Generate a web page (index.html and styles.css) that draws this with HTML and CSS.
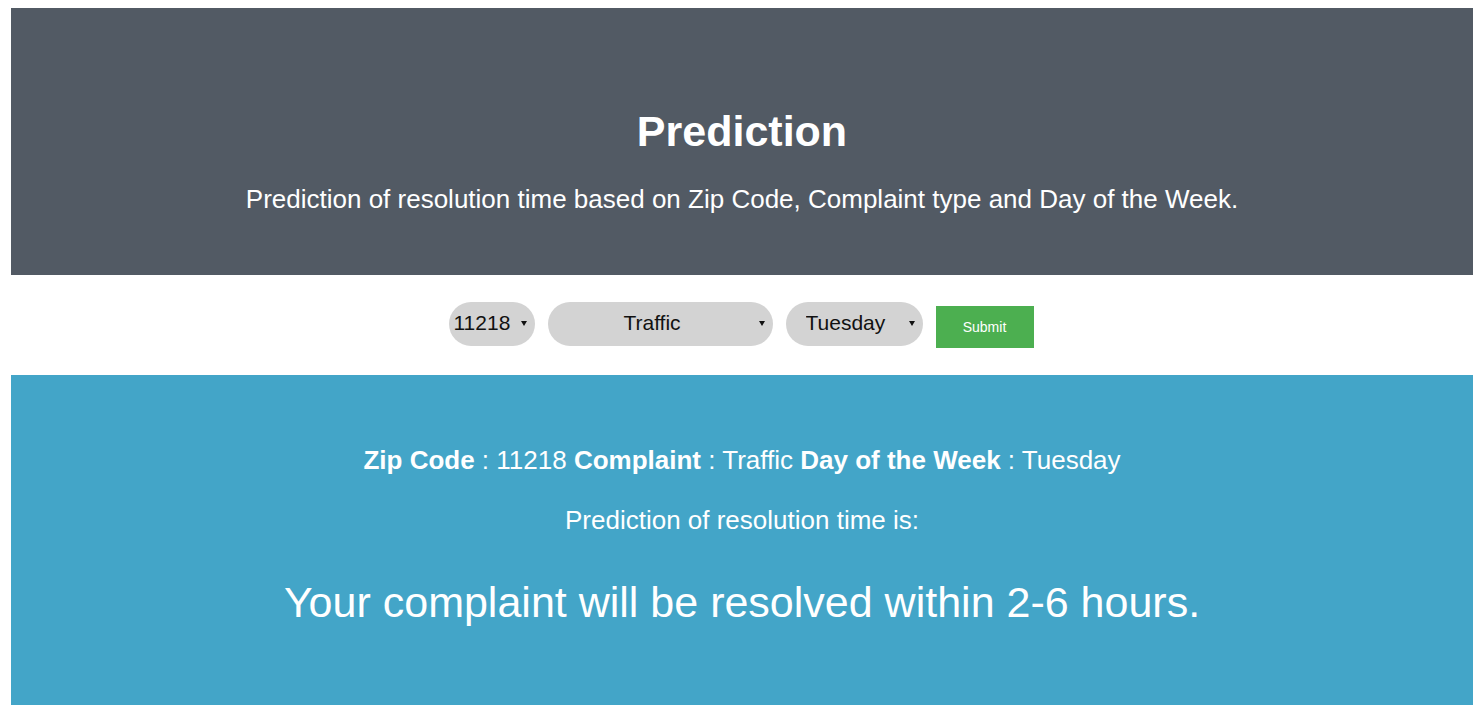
FILE: index.html
```html
<!DOCTYPE html>
<html>
<head>
<meta charset="utf-8">
<title>Prediction</title>
<link rel="stylesheet" href="styles.css">
</head>
<body>
<header class="hero">
  <h1 class="hero-title">Prediction</h1>
  <p class="hero-sub">Prediction of resolution time based on Zip Code, Complaint type and Day of the Week.</p>
</header>
<form class="controls">
  <div class="sel-wrap sel-zip">
    <select class="sel"><option>11218</option></select>
  </div>
  <div class="sel-wrap sel-type">
    <select class="sel sel-center"><option>Traffic</option></select>
  </div>
  <div class="sel-wrap sel-day">
    <select class="sel"><option>Tuesday</option></select>
  </div>
  <button type="button" class="submit">Submit</button>
</form>
<section class="result">
  <p class="summary"><b>Zip Code</b> : 11218 <b>Complaint</b> : Traffic <b>Day of the Week</b> : Tuesday</p>
  <p class="label">Prediction of resolution time is:</p>
  <p class="answer">Your complaint will be resolved within 2-6 hours.</p>
</section>
</body>
</html>
```
FILE: styles.css
```css
* { box-sizing: border-box; }
html, body { margin: 0; padding: 0; background: #ffffff; }
body {
  padding: 8px 11px 0 11px;
  font-family: "Liberation Sans", Arial, sans-serif;
  color: #ffffff;
}
.hero {
  background: #525a64;
  height: 267px;
  display: flex;
  flex-direction: column;
  align-items: center;
  padding-top: 100px;
}
.hero-title {
  margin: 0;
  font-size: 43px;
  line-height: 46px;
  font-weight: bold;
}
.hero-sub {
  margin: 30px 0 0 0;
  font-size: 26px;
  line-height: 30px;
}
.controls {
  height: 100px;
  display: flex;
  justify-content: center;
  align-items: flex-start;
  padding-top: 27px;
  padding-right: 2px;
  gap: 13px;
}
.sel-wrap {
  position: relative;
  height: 44px;
}
.sel-wrap::after {
  content: "";
  position: absolute;
  right: 8px;
  top: 19px;
  border-left: 3px solid transparent;
  border-right: 3px solid transparent;
  border-top: 5px solid #111;
  pointer-events: none;
}
.sel {
  -webkit-appearance: none;
  appearance: none;
  height: 44px;
  border: none;
  border-radius: 22px;
  background: #d3d3d3;
  font-family: "Liberation Sans", Arial, sans-serif;
  font-size: 21px;
  color: #111;
  padding: 0 20px 3px 5px;
  outline: none;
}
.sel-zip .sel { width: 86px; }
.sel-type .sel { width: 225px; text-align-last: center; padding-left: 4px; }
.sel-day .sel { width: 137px; padding-left: 20px; }
.submit {
  margin-top: 4px;
  width: 98px;
  height: 42px;
  border: none;
  background: #4caf50;
  color: #ffffff;
  font-family: "Liberation Sans", Arial, sans-serif;
  font-size: 14px;
}
.result {
  background: #43a5c8;
  height: 330px;
  display: flex;
  flex-direction: column;
  align-items: center;
  padding-top: 70px;
}
.summary {
  margin: 0;
  font-size: 26px;
  line-height: 30px;
}
.label {
  margin: 30px 0 0 0;
  font-size: 26px;
  line-height: 30px;
}
.answer {
  margin: 40px 0 0 0;
  font-size: 43px;
  line-height: 54px;
}
```
